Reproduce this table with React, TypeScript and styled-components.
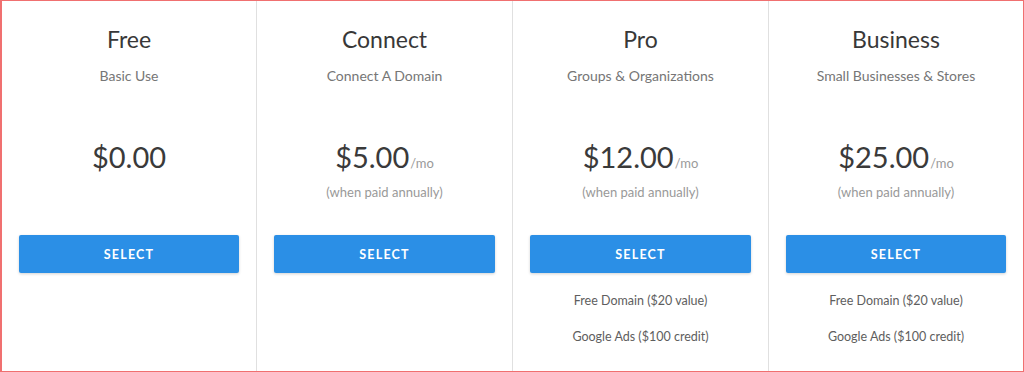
import React from 'react'
import styled, { createGlobalStyle } from 'styled-components';

const GlobalStyle = createGlobalStyle`
body {
  margin: 0;
  background: #ffffff;
  font-family: Lato, "Open Sans", sans-serif;
}
`;

const Frame = styled.div`
box-sizing: border-box;
width: 1024px;
height: 372px;
border: 1px solid #f07070;
border-left-width: 2px;
display: grid;
grid-template-columns: 255px 256px 256px 1fr;
background: #ffffff;
overflow: hidden;
`;

interface ColumnProps {
  last?: boolean;
}

const Column = styled.div<ColumnProps>`
display: flex;
flex-direction: column;
align-items: stretch;
text-align: center;
padding: 24px 17px 0px 17px;
border-right: ${({last}) => (last ? 'none' : '1px solid #e0e0e0')};
`;

const Title = styled.h2`
margin: 0;
font-size: 23px;
line-height: 28px;
font-weight: 400;
color: #383838;
`;

const Subtitle = styled.p`
margin: 14px 0px 0px 0px;
font-size: 14px;
line-height: 18px;
color: #767676;
`;

const PriceArea = styled.div`
margin-top: 54px;
height: 96px;
`;

const Price = styled.div`
font-size: 29px;
line-height: 36px;
color: #3a3a3a;
`;

const PerMonth = styled.span`
font-size: 13px;
color: #9a9a9a;
margin-left: 1px;
`;

const Note = styled.p`
margin: 2px 0px 0px 0px;
font-size: 13px;
line-height: 18px;
color: #999999;
`;

const SelectButton = styled.button`
height: 38px;
width: 100%;
border: none;
border-radius: 2px;
background: #2b8fe6;
color: #ffffff;
font-family: Lato, "Open Sans", sans-serif;
font-size: 12.5px;
font-weight: 700;
letter-spacing: 1.2px;
box-shadow: 0px 1px 3px rgba(0, 0, 0, 0.18);
cursor: pointer;
`;

const FeatureList = styled.div`
display: flex;
flex-direction: column;
gap: 18px;
margin-top: 19px;
`;

const Feature = styled.p`
margin: 0;
font-size: 12.5px;
line-height: 18px;
color: #5e5e5e;
`;

type Plan = {
  name: string;
  subtitle: string;
  price: string;
  monthly: boolean;
  features: string[];
};

const plans: Plan[] = [
  { name: 'Free', subtitle: 'Basic Use', price: '$0.00', monthly: false, features: [] },
  { name: 'Connect', subtitle: 'Connect A Domain', price: '$5.00', monthly: true, features: [] },
  {
    name: 'Pro',
    subtitle: 'Groups & Organizations',
    price: '$12.00',
    monthly: true,
    features: ['Free Domain ($20 value)', 'Google Ads ($100 credit)'],
  },
  {
    name: 'Business',
    subtitle: 'Small Businesses & Stores',
    price: '$25.00',
    monthly: true,
    features: ['Free Domain ($20 value)', 'Google Ads ($100 credit)'],
  },
];

function App() {
  return (
    <>
      <GlobalStyle />
      <Frame>
        {plans.map((plan, i) => (
          <Column key={plan.name} last={i === plans.length - 1}>
            <Title>{plan.name}</Title>
            <Subtitle>{plan.subtitle}</Subtitle>
            <PriceArea>
              <Price>
                {plan.price}
                {plan.monthly && <PerMonth>/mo</PerMonth>}
              </Price>
              {plan.monthly && <Note>(when paid annually)</Note>}
            </PriceArea>
            <SelectButton>SELECT</SelectButton>
            {plan.features.length > 0 && (
              <FeatureList>
                {plan.features.map((f) => (
                  <Feature key={f}>{f}</Feature>
                ))}
              </FeatureList>
            )}
          </Column>
        ))}
      </Frame>
    </>
  )
}

export default App
